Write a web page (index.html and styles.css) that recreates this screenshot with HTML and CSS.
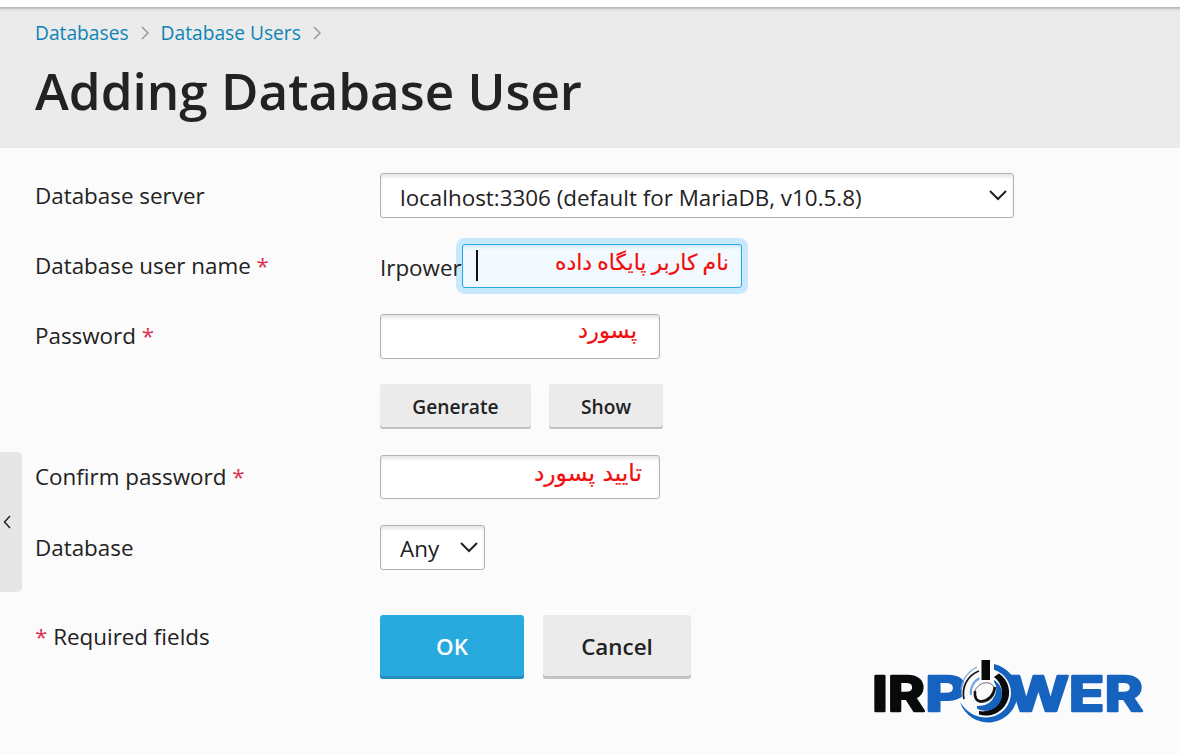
FILE: index.html
```html
<!DOCTYPE html>
<html lang="en">
<head>
<meta charset="utf-8">
<title>Adding Database User</title>
<link rel="stylesheet" href="styles.css">
</head>
<body>
<header class="page-header">
  <nav class="breadcrumbs">
    <a>Databases</a>
    <svg class="crumb-arrow" viewBox="0 0 8 14"><path d="M1 1l6 6-6 6"/></svg>
    <a>Database Users</a>
    <svg class="crumb-arrow" viewBox="0 0 8 14"><path d="M1 1l6 6-6 6"/></svg>
  </nav>
  <h1 class="title">Adding Database User</h1>
</header>
<main class="form">
  <div class="row">
    <div class="label">Database server</div>
    <div class="box select server"><span>localhost:3306 (default for MariaDB, v10.5.8)</span><svg class="chevron" viewBox="0 0 18 11"><path d="M1 1l8 8 8-8"/></svg></div>
  </div>
  <div class="row">
    <div class="label">Database user name <span class="req">*</span></div>
    <span class="prefix">Irpower</span>
    <div class="box input focused"><i class="caret"></i><span class="note note-name" lang="fa" dir="rtl">نام کاربر پایگاه داده</span></div>
  </div>
  <div class="row">
    <div class="label">Password <span class="req">*</span></div>
    <div class="box input"><span class="note note-pass" lang="fa" dir="rtl">پسورد</span></div>
  </div>
  <div class="row">
    <div class="label"></div>
    <button class="btn generate">Generate</button>
    <button class="btn show">Show</button>
  </div>
  <div class="row">
    <div class="label">Confirm password <span class="req">*</span></div>
    <div class="box input confirm"><span class="note note-confirm" lang="fa" dir="rtl">تایید پسورد</span></div>
  </div>
  <div class="row">
    <div class="label">Database</div>
    <div class="box select any"><span>Any</span><svg class="chevron" viewBox="0 0 18 11"><path d="M1 1l8 8 8-8"/></svg></div>
  </div>
  <div class="row actions">
    <div class="label"><span class="req">*</span> Required fields</div>
    <button class="btn big primary">OK</button>
    <button class="btn big cancel">Cancel</button>
  </div>
</main>
<div class="drawer"><svg viewBox="0 0 8 14"><path d="M7 1L1.5 7 7 13"/></svg></div>
<svg class="logo" viewBox="0 0 300 90">
  <g class="logo-text">
    <text class="dark" x="12" y="61" textLength="53" lengthAdjust="spacingAndGlyphs">IR</text>
    <text x="65" y="61" textLength="42" lengthAdjust="spacingAndGlyphs">P</text>
    <text x="148" y="61" textLength="135" lengthAdjust="spacingAndGlyphs">WER</text>
  </g>
  <circle cx="127" cy="43" r="25.500" fill="#fbfbfb"/>
  <path d="M134 14.100A29.500 29.500 0 1 1 100 52Q110 67.500 126 67.500A24.500 24.500 0 0 0 134 19.700Z" fill="#1663bf"/>
  <path d="M139 23.500A23 23 0 0 1 119 64.400V61A19 19 0 0 0 134 27Z" fill="#080a0c" stroke="#d8dde2" stroke-width=".7" paint-order="stroke"/>
  <path d="M119 21A24 24 0 0 0 104 49" fill="none" stroke="#151719" stroke-width="1.800"/>
  <path d="M117 17A28 28 0 0 0 101 40" fill="none" stroke="#79a9de" stroke-width="1.200"/>
  <path d="M134 29.900A16.500 16.500 0 0 1 117 58.400V56Q130 57 135 45Q138 37 134 32Z" fill="#1663bf"/>
  <path d="M120 28A16 16 0 0 0 111 45" fill="none" stroke="#68a2e2" stroke-width="2"/>
  <ellipse cx="124.500" cy="42.500" rx="11" ry="9" transform="rotate(-40 124.500 42.500)" fill="#fbfbfb" stroke="#55595c" stroke-width=".8"/>
  <path d="M115 41Q114 51 121 51.500Q133 50 135 37" fill="none" stroke="#111" stroke-width="2.600"/>
  <path d="M121.500 10h8.500v20h-8.500z" fill="#080a0c" stroke="#fbfbfb" stroke-width="4" paint-order="stroke"/>
</svg>
</body>
</html>
```
FILE: styles.css
```css
* { box-sizing: border-box; }
body { margin: 0; width: 1180px; height: 754px; overflow: hidden; position: relative; background: #fbfbfb; color: #222; font: 22.4px/30px "Open Sans", sans-serif; padding-top: 7px; }
body::before { content: ""; position: absolute; inset: 0 0 auto; height: 7px; background: #fff; }
.page-header { height: 141px; padding: 12px 35px 0; background: linear-gradient(#b9b9b9 0, #b9b9b9 1px, #d4d4d4 2px, #e4e4e4 3px, #ebebeb 5px); }
.breadcrumbs { display: flex; align-items: center; height: 28px; font-size: 19.2px; line-height: 28px; color: #0d84b5; }
.crumb-arrow { width: 8px; height: 14px; margin: 0 12px; fill: none; stroke: #999; stroke-width: 1.5; }
.title { margin: 8px 0 0; font-size: 51.2px; line-height: 70px; font-weight: 600; white-space: nowrap; }
.form { display: flex; flex-direction: column; gap: 25.4px; padding: 25px 35px 0; }
.row { display: flex; align-items: flex-start; height: 45px; }
.label { width: 345px; flex: none; padding-top: 7.6px; white-space: nowrap; }
.req { color: #dc3151; }
.box { display: flex; flex: none; height: 45px; border: 1px solid #b2b2b2; border-radius: 3px; background: #fff; box-shadow: inset 0 3px 3px #e8e8e8; }
.select { align-items: center; justify-content: space-between; padding: 4px 6px 0 19px; white-space: nowrap; }
.server { width: 634px; }
.any { width: 105px; padding-top: 3px; }
.chevron { width: 18px; height: 11px; margin-top: -3px; fill: none; stroke: #222; stroke-width: 2; }
.server .chevron { margin-top: -4px; }
.input { width: 280px; justify-content: flex-end; }
.prefix { position: relative; z-index: 1; width: 82px; padding-top: 10px; }
.focused { height: 44px; margin-top: 1px; border-color: #28aade; background: #f2faff; box-shadow: 0 0 0 6px #c8e8fe, inset 0 3px 3px #d8edf8; justify-content: space-between; }
.confirm { height: 44px; }
.caret { width: 2px; height: 31px; margin: 5px 0 0 13px; background: #111; }
.note { color: #f20d0d; font: 22px/30px "DejaVu Sans", sans-serif; white-space: nowrap; -webkit-text-stroke: .2px #f20d0d; }
.note-name { margin: 3px 12px 0 0; word-spacing: -2px; }
.note-pass { margin: 0 22px 0 0; font-size: 22.6px; }
.note-confirm { margin: 2px 17px 0 0; font-size: 23.4px; }
.btn { height: 45px; border: 0; border-radius: 3px; padding: 1px 0 0; background: #ebebeb; box-shadow: inset 0 -2px #c2c2c2; color: #222; font: 600 19.2px/28px "Open Sans", sans-serif; }
.generate { width: 151px; }
.show { width: 114px; margin-left: 18px; }
.actions { height: 64px; margin-top: 19.6px; }
.actions .label { padding-top: 7px; }
.big { height: 64px; padding: 0; font-size: 22.4px; box-shadow: inset 0 -3px #c2c2c2; }
.primary { width: 144px; background: #28aade; color: #fff; box-shadow: inset 0 -3px #2590bd; }
.cancel { width: 148px; margin-left: 19px; }
.drawer { position: absolute; left: 0; top: 452px; width: 22px; height: 140px; padding-left: 3px; display: flex; align-items: center; background: #e6e6e6; border-radius: 0 5px 5px 0; }
.drawer svg { width: 8px; height: 14px; fill: none; stroke: #222; stroke-width: 1.5; }
.logo { position: absolute; left: 860px; top: 650px; width: 300px; height: 90px; }
.logo-text { font: 700 48px Inter, sans-serif; fill: #1663bf; stroke: #1663bf; stroke-width: 2.4; stroke-linejoin: round; }
.logo-text .dark { fill: #080a0c; stroke: #080a0c; }
```
